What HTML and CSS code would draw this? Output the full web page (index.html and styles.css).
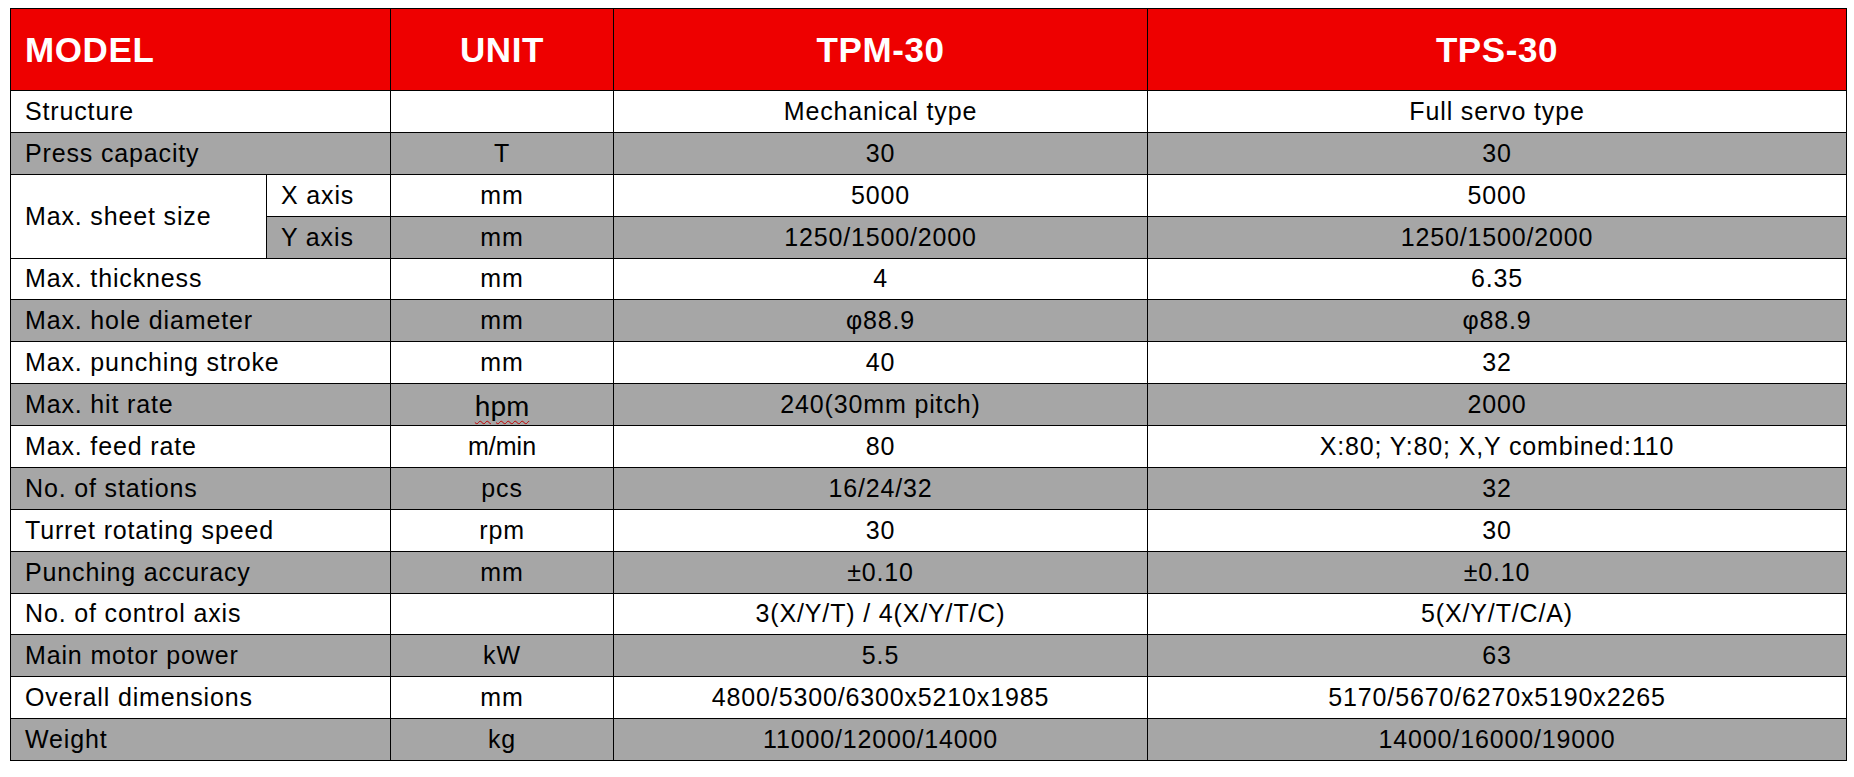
FILE: index.html
```html
<!DOCTYPE html>
<html lang="en">
<head>
<meta charset="utf-8">
<title>TPM-30 / TPS-30 Specifications</title>
<link rel="stylesheet" href="styles.css">
</head>
<body>
<table class="spec">
  <colgroup>
    <col class="c-name">
    <col class="c-sub">
    <col class="c-unit">
    <col class="c-tpm">
    <col class="c-tps">
  </colgroup>
  <thead>
    <tr class="head">
      <th colspan="2" class="left">MODEL</th>
      <th>UNIT</th>
      <th>TPM-30</th>
      <th>TPS-30</th>
    </tr>
  </thead>
  <tbody>
    <tr class="w"><td colspan="2" class="left">Structure</td><td></td><td>Mechanical type</td><td>Full servo type</td></tr>
    <tr class="g"><td colspan="2" class="left">Press capacity</td><td>T</td><td>30</td><td>30</td></tr>
    <tr class="w"><td rowspan="2" class="left white">Max. sheet size</td><td class="left">X axis</td><td>mm</td><td>5000</td><td>5000</td></tr>
    <tr class="g"><td class="left">Y axis</td><td>mm</td><td>1250/1500/2000</td><td>1250/1500/2000</td></tr>
    <tr class="w"><td colspan="2" class="left">Max. thickness</td><td>mm</td><td>4</td><td>6.35</td></tr>
    <tr class="g"><td colspan="2" class="left">Max. hole diameter</td><td>mm</td><td>φ88.9</td><td>φ88.9</td></tr>
    <tr class="w"><td colspan="2" class="left">Max. punching stroke</td><td>mm</td><td>40</td><td>32</td></tr>
    <tr class="g"><td colspan="2" class="left">Max. hit rate</td><td class="hpm"><span class="spell">hpm</span></td><td>240(30mm pitch)</td><td>2000</td></tr>
    <tr class="w"><td colspan="2" class="left">Max. feed rate</td><td class="mmin">m/min</td><td>80</td><td>X:80; Y:80; X,Y combined:110</td></tr>
    <tr class="g"><td colspan="2" class="left">No. of stations</td><td>pcs</td><td>16/24/32</td><td>32</td></tr>
    <tr class="w"><td colspan="2" class="left">Turret rotating speed</td><td>rpm</td><td>30</td><td>30</td></tr>
    <tr class="g"><td colspan="2" class="left">Punching accuracy</td><td>mm</td><td>±0.10</td><td>±0.10</td></tr>
    <tr class="w"><td colspan="2" class="left">No. of control axis</td><td></td><td>3(X/Y/T) / 4(X/Y/T/C)</td><td>5(X/Y/T/C/A)</td></tr>
    <tr class="g"><td colspan="2" class="left">Main motor power</td><td>kW</td><td>5.5</td><td>63</td></tr>
    <tr class="w"><td colspan="2" class="left">Overall dimensions</td><td>mm</td><td>4800/5300/6300x5210x1985</td><td>5170/5670/6270x5190x2265</td></tr>
    <tr class="g"><td colspan="2" class="left">Weight</td><td>kg</td><td>11000/12000/14000</td><td>14000/16000/19000</td></tr>
  </tbody>
</table>
</body>
</html>
```
FILE: styles.css
```css
html, body {
  background: #ffffff;
}
body {
  margin: 8px 0 0 10px;
  font-family: "Liberation Sans", Arial, sans-serif;
  color: #000;
}
.spec {
  border-collapse: collapse;
  table-layout: fixed;
  width: 1837px;
  font-size: 25px;
  letter-spacing: 0.85px;
}
.c-name { width: 256px; }
.c-sub { width: 124px; }
.c-unit { width: 223px; }
.c-tpm { width: 534px; }
.c-tps { width: 699px; }
.spec th, .spec td {
  border: 1px solid #000;
  text-align: center;
  vertical-align: middle;
  padding: 0 12px;
  white-space: nowrap;
}
.spec .left {
  text-align: left;
}
.head th {
  background: #ee0000;
  color: #fff;
  font-weight: bold;
  font-size: 35px;
  letter-spacing: 0.6px;
  height: 81px;
}
.head th.left {
  padding-left: 14px;
}
.spec tbody tr {
  height: 41.875px;
}
.spec tbody td.left {
  padding-left: 14px;
}
.w td { background: #ffffff; }
.g td { background: #a6a6a6; }
.g td.white { background: #ffffff; }
.hpm {
  font-family: "Lato", "Liberation Sans", sans-serif;
  font-size: 28px;
  letter-spacing: 0;
}
.mmin {
  letter-spacing: 0;
}
.spell {
  text-decoration: underline wavy #c00000;
  text-decoration-thickness: 1px;
  text-underline-offset: 4px;
}
```
